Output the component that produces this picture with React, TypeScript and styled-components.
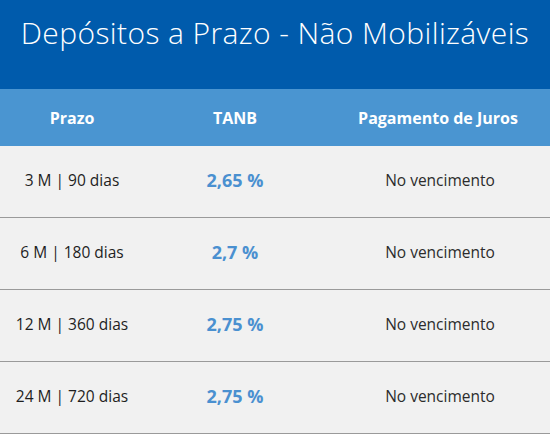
import React from 'react';
import styled, {createGlobalStyle} from 'styled-components';

const GlobalStyle = createGlobalStyle`
html, body {
  margin: 0;
  padding: 0;
  background: #ffffff;
}
`

const Wrap = styled.div`
width: 550px;
font-family: "Open Sans", "Liberation Sans", sans-serif;
`
const Banner = styled.div`
height: 89px;
background-color: #005bac;
display: flex;
justify-content: center;
padding-top: 13px;
box-sizing: border-box;
`
const Title = styled.h2`
margin: 0;
color: #ffffff;
font-family: "Open Sans", "Liberation Sans", sans-serif;
font-weight: 300;
font-size: 30px;
line-height: 40px;
letter-spacing: 0.4px;
`
const Table = styled.div`
display: grid;
grid-template-columns: 144px 182px 1fr;
`
const HeadCell = styled.div`
height: 57px;
background-color: #4a95d1;
color: #ffffff;
font-weight: 700;
font-size: 16px;
display: flex;
align-items: center;
justify-content: center;
`
const Cell = styled.div<{$kind?: 'term' | 'rate' | 'pay'}>`
height: 72px;
background-color: #f1f1f1;
border-bottom: 1px solid #9a9a9a;
display: flex;
align-items: center;
justify-content: center;
padding-bottom: 3px;
box-sizing: border-box;
font-family: "Open Sans", "Liberation Sans", sans-serif;
color: ${p => p.$kind === 'rate' ? '#4a90d0' : p.$kind === 'term' ? '#1e1e1e' : '#2c2c2c'};
font-size: ${p => p.$kind === 'rate' ? '18px' : p.$kind === 'term' ? '15.5px' : '15.5px'};
font-weight: ${p => p.$kind === 'rate' ? 700 : p.$kind === 'term' ? 500 : 400};
padding-left: ${p => p.$kind === 'pay' ? '4px' : '0'};
`

const rows = [
    {term: '3 M | 90 dias', rate: '2,65 %'},
    {term: '6 M | 180 dias', rate: '2,7 %'},
    {term: '12 M | 360 dias', rate: '2,75 %'},
    {term: '24 M | 720 dias', rate: '2,75 %'},
]

export default function App() {
    return (
        <>
            <GlobalStyle/>
            <Wrap>
                <Banner>
                    <Title>Depósitos a Prazo - Não Mobilizáveis</Title>
                </Banner>
                <Table>
                    <HeadCell>Prazo</HeadCell>
                    <HeadCell>TANB</HeadCell>
                    <HeadCell>Pagamento de Juros</HeadCell>
                    {rows.map(r => (
                        <React.Fragment key={r.term}>
                            <Cell $kind="term">{r.term}</Cell>
                            <Cell $kind="rate">{r.rate}</Cell>
                            <Cell $kind="pay">No vencimento</Cell>
                        </React.Fragment>
                    ))}
                </Table>
            </Wrap>
        </>
    );
}
